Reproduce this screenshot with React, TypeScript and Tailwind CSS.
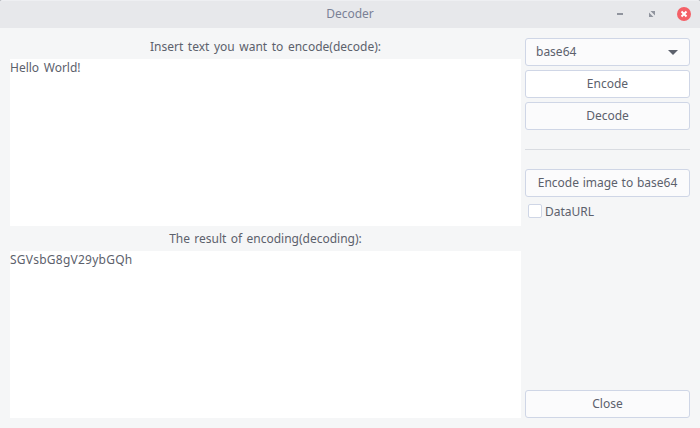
import React, { useState } from "react";

const buttonBase =
  "flex h-7 w-full shrink-0 items-center justify-center rounded-[3px] border border-[#cfd6e6] leading-4 whitespace-nowrap";

function TitleBar() {
  return (
    <header className="flex h-7 shrink-0 items-center rounded-t-[3px] border-t border-[#eeeff2] bg-[#e7e8eb]">
      <div className="w-[100px]" />
      <h1 className="flex-1 pb-0.5 text-center leading-4 text-[#7a8196]">Decoder</h1>
      <svg className="-mt-px" width="100" height="28" viewBox="600 0 100 28">
        <path d="M617 13h6v2h-6z" fill="#90949e" />
        <path d="M650.5 11h4.5v4.5zM649 12.5v4.5h4.5z" fill="#90949e" />
        <circle cx="684" cy="14" r="7" fill="#f46067" />
        <path d="M681.5 11.5l5 5M686.5 11.5l-5 5" stroke="#fff" strokeWidth="2" />
      </svg>
    </header>
  );
}

export default function App() {
  const [dataUrl, setDataUrl] = useState(false);

  return (
    <div className="h-[428px] w-[700px] bg-[#b9bbc0]">
      <div className="flex h-full flex-col overflow-hidden rounded-t-[3px] bg-[#f5f6f7] font-['Noto_Sans',sans-serif] text-[12px] text-[#5c616c]">
        <TitleBar />
        <main className="flex flex-1 gap-1 p-2.5">
          <section className="flex w-[511px] flex-col">
            <div className="h-[21px] text-center leading-[18px] [word-spacing:1.45px]">
              Insert text you want to encode(decode):
            </div>
            <div className="h-[167px] bg-white leading-[18px] [word-spacing:1.5px]">Hello World!</div>
            <div className="h-[25px] text-center leading-[26px] [word-spacing:1.2px]">
              The result of encoding(decoding):
            </div>
            <div className="h-[167px] bg-white leading-[18px] tracking-[0.25px]">SGVsbG8gV29ybGQh</div>
          </section>
          <aside className="flex w-[165px] flex-col">
            <button className="flex h-7 w-full items-center justify-between rounded-[3px] border border-[#cfd6e6] bg-[#fbfbfc] pr-[11px] pl-2.5 leading-4">
              <span>base64</span>
              <svg width="10" height="5" viewBox="0 0 10 5"><path d="M0 0h10L5 5z" fill="#5c616c" /></svg>
            </button>
            <button className={`${buttonBase} mt-1 bg-white`}>Encode</button>
            <button className={`${buttonBase} mt-1 bg-[#fbfbfc]`}>Decode</button>
            <hr className="mt-[19px] border-[#d9dce1]" />
            <button className={`${buttonBase} mt-[19px] bg-[#fbfbfc] [word-spacing:0.6px]`}>Encode image to base64</button>
            <label className="mt-1.5 flex h-4 items-center gap-[3px] pl-[3px] leading-4">
              <input
                type="checkbox"
                checked={dataUrl}
                onChange={() => setDataUrl(!dataUrl)}
                className="size-3.5 appearance-none rounded-[2px] border border-[#cfd6e6] bg-white checked:bg-[#5294e2]"
              />
              <span className="pt-0.5">DataURL</span>
            </label>
            <button className={`${buttonBase} mt-auto bg-[#fbfbfc]`}>Close</button>
          </aside>
        </main>
      </div>
    </div>
  );
}
